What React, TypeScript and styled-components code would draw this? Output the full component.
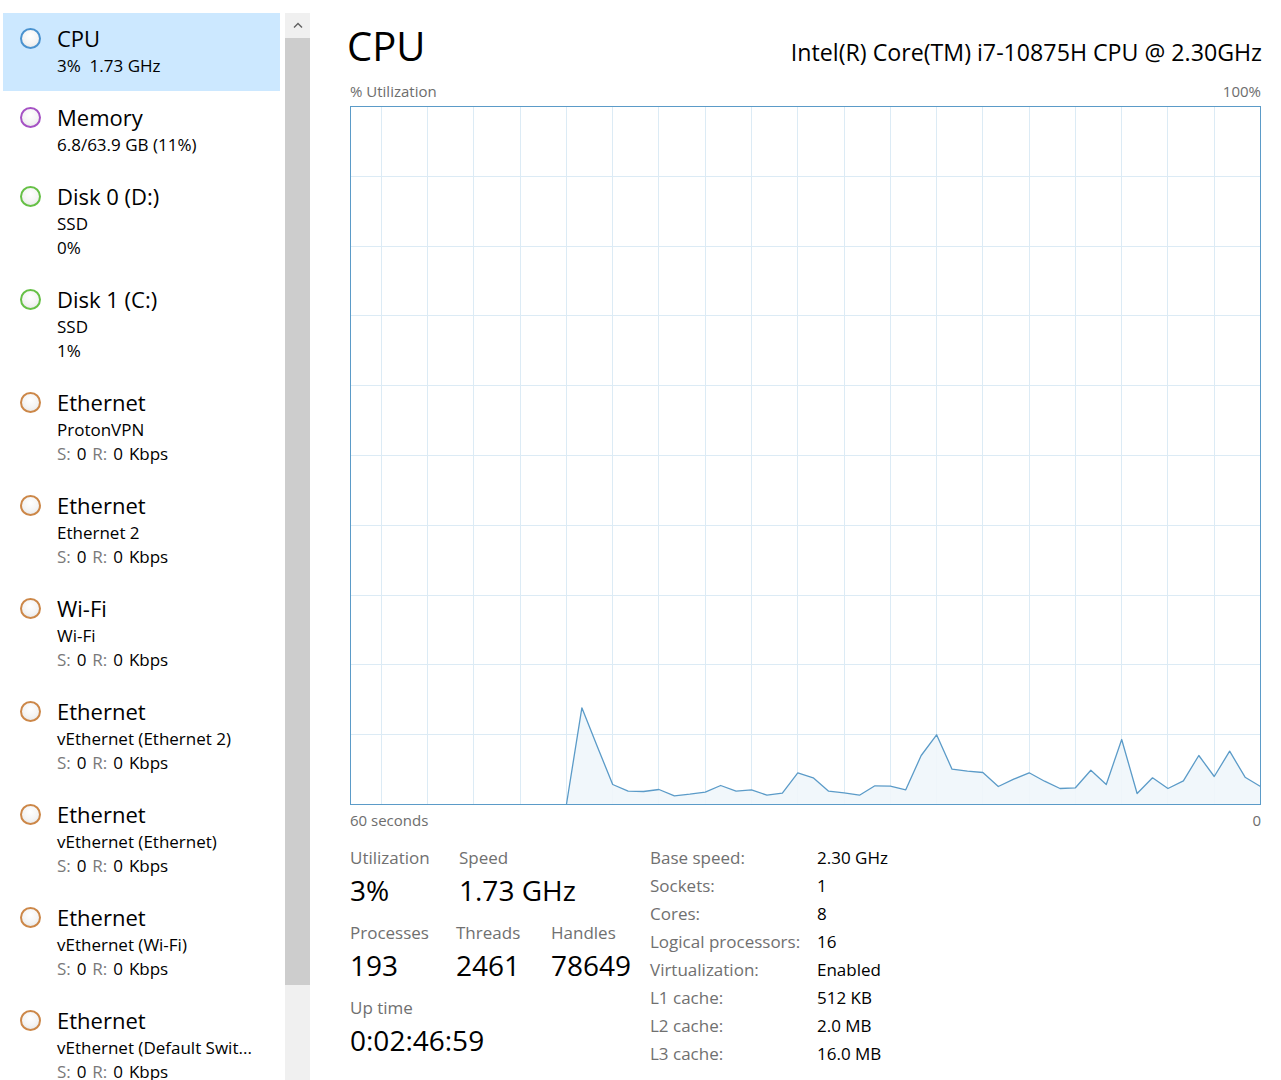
import React from 'react';
import styled, { createGlobalStyle } from 'styled-components';

const GlobalStyle = createGlobalStyle`
  html, body { margin: 0; padding: 0; background: #ffffff; }
  body { font-family: "Open Sans", "Noto Sans", sans-serif; color: #000; }
  #root { width: 1281px; height: 1080px; overflow: hidden; }
`;

const Shell = styled.div`
  display: flex;
  width: 1281px;
  height: 1080px;
  overflow: hidden;
  background: #fff;
`;

const Sidebar = styled.aside`
  display: flex;
  flex: none;
  width: 310px;
  height: 100%;
`;

const List = styled.div`
  flex: none;
  width: 277px;
  padding: 13px 5px 0 3px;
  display: flex;
  flex-direction: column;
  gap: 1px;
  overflow: hidden;
`;

const Item = styled.div<{ $selected?: boolean }>`
  flex: none;
  padding: 9px 0 13px 17px;
  background: ${(p) => (p.$selected ? '#cce8ff' : 'transparent')};
`;

const TitleRow = styled.div`
  display: flex;
  align-items: center;
  gap: 16px;
`;

const Dot = styled.span<{ $color: string }>`
  flex: none;
  width: 21px;
  height: 21px;
  box-sizing: border-box;
  border-radius: 50%;
  border: 2px solid ${(p) => p.$color};
  background: radial-gradient(circle at 50% 35%, #ffffff 0%, #f4f4f4 55%, #e2e2e2 100%);
`;

const ItemTitle = styled.div`
  font-size: 22px;
  line-height: 32px;
`;

const Sub = styled.div<{ $wide?: boolean }>`
  padding-left: 37px;
  font-size: 17px;
  line-height: 24px;
  white-space: pre;
  word-spacing: ${(p) => (p.$wide ? '1.5px' : 'normal')};
`;

const Muted = styled.span`
  color: #7a7a7a;
`;

const Scrollbar = styled.div`
  flex: none;
  width: 25px;
  margin-top: 13px;
  background: #f0f0f0;
  display: flex;
  flex-direction: column;
`;

const ScrollArrow = styled.div`
  height: 25px;
  display: flex;
  align-items: center;
  justify-content: center;
`;

const Thumb = styled.div`
  height: 947px;
  background: #cdcdcd;
`;

const Main = styled.main`
  flex: 1;
  display: flex;
  flex-direction: column;
  padding: 0 20px 0 40px;
  min-width: 0;
`;

const Header = styled.header`
  display: flex;
  justify-content: space-between;
  align-items: baseline;
  padding-top: 22px;
`;

const PageTitle = styled.h1`
  margin: 0 0 0 -3px;
  font-weight: 400;
  font-size: 40px;
  line-height: 48px;
`;

const Model = styled.div`
  font-size: 23.2px;
  line-height: 30px;
  margin-right: -1px;
`;

const AxisRow = styled.div<{ $top: number }>`
  display: flex;
  justify-content: space-between;
  margin-top: ${(p) => p.$top}px;
  font-size: 15px;
  line-height: 20px;
  color: #6d6d6d;
`;

const GraphSvg = styled.svg`
  display: block;
  margin-top: 5px;
  flex: none;
`;

const Stats = styled.section`
  display: flex;
  margin-top: 14px;
`;

const LeftStats = styled.div`
  width: 300px;
  display: flex;
  flex-direction: column;
  gap: 11px;
`;

const StatRow = styled.div`
  display: flex;
`;

const Stat = styled.div<{ $w?: number }>`
  width: ${(p) => (p.$w ? `${p.$w}px` : 'auto')};
  display: flex;
  flex-direction: column;
`;

const StatLabel = styled.div`
  font-size: 17px;
  line-height: 28px;
  color: #707070;
`;

const StatValue = styled.div`
  font-size: 28px;
  line-height: 36px;
`;

const InfoTable = styled.div`
  display: grid;
  grid-template-columns: 167px auto;
  font-size: 17px;
  line-height: 28px;
`;

const InfoKey = styled.div`
  color: #707070;
`;

const InfoVal = styled.div`
  color: #000;
`;

type Line = string | 'NET';

interface Device {
  title: string;
  color: string;
  lines: Line[];
  selected?: boolean;
}

const BLUE = '#4a92cf';
const PURPLE = '#a552c4';
const GREEN = '#66c046';
const ORANGE = '#cc8748';

const DEVICES: Device[] = [
  { title: 'CPU', color: BLUE, lines: ['3%  1.73 GHz'], selected: true },
  { title: 'Memory', color: PURPLE, lines: ['6.8/63.9 GB (11%)'] },
  { title: 'Disk 0 (D:)', color: GREEN, lines: ['SSD', '0%'] },
  { title: 'Disk 1 (C:)', color: GREEN, lines: ['SSD', '1%'] },
  { title: 'Ethernet', color: ORANGE, lines: ['ProtonVPN', 'NET'] },
  { title: 'Ethernet', color: ORANGE, lines: ['Ethernet 2', 'NET'] },
  { title: 'Wi-Fi', color: ORANGE, lines: ['Wi-Fi', 'NET'] },
  { title: 'Ethernet', color: ORANGE, lines: ['vEthernet (Ethernet 2)', 'NET'] },
  { title: 'Ethernet', color: ORANGE, lines: ['vEthernet (Ethernet)', 'NET'] },
  { title: 'Ethernet', color: ORANGE, lines: ['vEthernet (Wi-Fi)', 'NET'] },
  { title: 'Ethernet', color: ORANGE, lines: ['vEthernet (Default Swit...', 'NET'] },
];

// heights in px above the baseline, oldest (45 s ago) to newest
const HISTORY = [
  0, 96.7, 58, 20, 13.3, 13, 15, 8.7, 10.3, 12.3, 19, 13.3, 14.7, 9.3, 11.3, 31.7,
  26.7, 13.3, 11.7, 9.3, 18.7, 18.3, 14.7, 49, 69.7, 35.3, 33.3, 32, 18, 25.3, 31.7,
  23.3, 16, 16.7, 34.3, 20, 65, 11, 26.7, 16, 23.7, 49, 28, 53.3, 27.3, 18,
];

const GW = 910;
const GH = 698;

function CpuGraph() {
  const step = GW / 59;
  const n = HISTORY.length;
  const pts = HISTORY.map((h, i) => {
    const k = n - 1 - i;
    return [0.5 + GW - k * step, 0.5 + GH - h] as [number, number];
  });
  const line = pts.map((p) => `${p[0].toFixed(2)},${p[1].toFixed(2)}`).join(' ');
  const area = `${line} ${0.5 + GW},${0.5 + GH} ${pts[0][0].toFixed(2)},${0.5 + GH}`;
  const hLines = Array.from({ length: 9 }, (_, j) => 0.5 + Math.round(((j + 1) * GH) / 10));
  const vLines = Array.from({ length: 19 }, (_, j) => 0.5 + Math.round(GW - (j + 1) * 3 * step));
  return (
    <GraphSvg width={GW + 1} height={GH + 1} viewBox={`0 0 ${GW + 1} ${GH + 1}`}>
      {hLines.map((y) => (
        <line key={`h${y}`} x1={0} x2={GW + 1} y1={y} y2={y} stroke="#dcebf5" strokeWidth={1} />
      ))}
      {vLines.map((x) => (
        <line key={`v${x}`} x1={x} x2={x} y1={0} y2={GH + 1} stroke="#dcebf5" strokeWidth={1} />
      ))}
      <polygon points={area} fill="#f0f6fb" opacity={0.9} />
      <polyline points={line} fill="none" stroke="#5b9bc8" strokeWidth={1.3} strokeLinejoin="round" />
      <rect x={0.5} y={0.5} width={GW} height={GH} fill="none" stroke="#5b9bc8" strokeWidth={1} />
    </GraphSvg>
  );
}

function DeviceItem({ d }: { d: Device }) {
  return (
    <Item $selected={d.selected}>
      <TitleRow>
        <Dot $color={d.color} />
        <ItemTitle>{d.title}</ItemTitle>
      </TitleRow>
      {d.lines.map((l, i) =>
        l === 'NET' ? (
          <Sub key={i} $wide>
            <Muted>S:</Muted> 0 <Muted>R:</Muted> 0 Kbps
          </Sub>
        ) : (
          <Sub key={i}>{l}</Sub>
        )
      )}
    </Item>
  );
}

const INFO: [string, string][] = [
  ['Base speed:', '2.30 GHz'],
  ['Sockets:', '1'],
  ['Cores:', '8'],
  ['Logical processors:', '16'],
  ['Virtualization:', 'Enabled'],
  ['L1 cache:', '512 KB'],
  ['L2 cache:', '2.0 MB'],
  ['L3 cache:', '16.0 MB'],
];

export default function App() {
  return (
    <>
      <GlobalStyle />
      <Shell>
        <Sidebar>
          <List>
            {DEVICES.map((d, i) => (
              <DeviceItem key={i} d={d} />
            ))}
          </List>
          <Scrollbar>
            <ScrollArrow>
              <svg width="10" height="7" viewBox="0 0 10 7">
                <polyline points="1,5.5 5,1.5 9,5.5" fill="none" stroke="#606060" strokeWidth="1.4" />
              </svg>
            </ScrollArrow>
            <Thumb />
          </Scrollbar>
        </Sidebar>
        <Main>
          <Header>
            <PageTitle>CPU</PageTitle>
            <Model>Intel(R) Core(TM) i7-10875H CPU @ 2.30GHz</Model>
          </Header>
          <AxisRow $top={11}>
            <span>% Utilization</span>
            <span>100%</span>
          </AxisRow>
          <CpuGraph />
          <AxisRow $top={5}>
            <span>60 seconds</span>
            <span>0</span>
          </AxisRow>
          <Stats>
            <LeftStats>
              <StatRow>
                <Stat $w={109}>
                  <StatLabel>Utilization</StatLabel>
                  <StatValue>3%</StatValue>
                </Stat>
                <Stat>
                  <StatLabel>Speed</StatLabel>
                  <StatValue>1.73 GHz</StatValue>
                </Stat>
              </StatRow>
              <StatRow>
                <Stat $w={106}>
                  <StatLabel>Processes</StatLabel>
                  <StatValue>193</StatValue>
                </Stat>
                <Stat $w={95}>
                  <StatLabel>Threads</StatLabel>
                  <StatValue>2461</StatValue>
                </Stat>
                <Stat>
                  <StatLabel>Handles</StatLabel>
                  <StatValue>78649</StatValue>
                </Stat>
              </StatRow>
              <StatRow>
                <Stat>
                  <StatLabel>Up time</StatLabel>
                  <StatValue>0:02:46:59</StatValue>
                </Stat>
              </StatRow>
            </LeftStats>
            <InfoTable>
              {INFO.map(([k, v]) => (
                <React.Fragment key={k}>
                  <InfoKey>{k}</InfoKey>
                  <InfoVal>{v}</InfoVal>
                </React.Fragment>
              ))}
            </InfoTable>
          </Stats>
        </Main>
      </Shell>
    </>
  );
}
